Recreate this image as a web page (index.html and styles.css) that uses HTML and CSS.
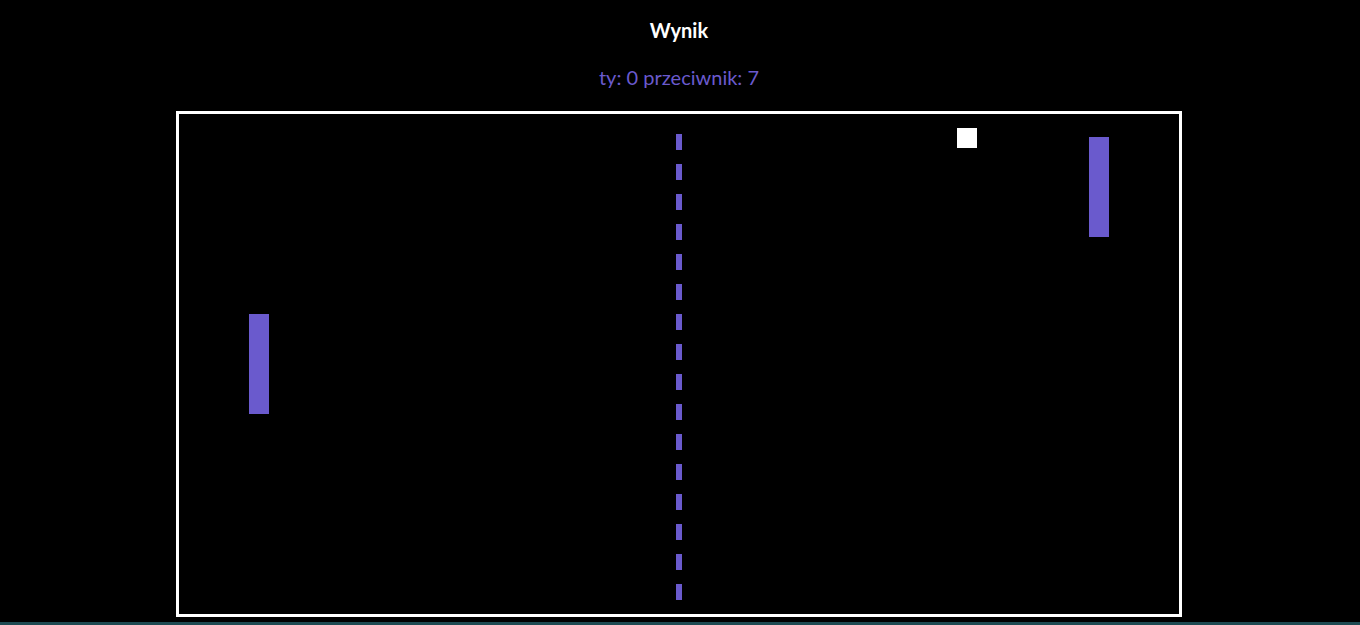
FILE: index.html
```html
<!DOCTYPE html>
<html lang="pl">
<head>
<meta charset="utf-8">
<title>Pong</title>
<link rel="stylesheet" href="styles.css">
</head>
<body>
<main class="page">
  <h1 class="title">Wynik</h1>
  <p class="score">ty: 0 przeciwnik: 7</p>
  <div class="field">
    <div class="net"></div>
    <div class="paddle paddle-left"></div>
    <div class="paddle paddle-right"></div>
    <div class="ball"></div>
  </div>
</main>
<div class="strip"></div>
</body>
</html>
```
FILE: styles.css
```css
html, body {
  margin: 0;
  padding: 0;
  background: #000;
}
body {
  font-family: "Lato", "DejaVu Sans", sans-serif;
  overflow: hidden;
  height: 625px;
}
.page {
  display: flex;
  flex-direction: column;
  align-items: center;
  padding-right: 2px;
}
.title {
  margin: 18px 0 0;
  font-size: 20px;
  line-height: 24px;
  font-weight: 700;
  color: #fff;
}
.score {
  margin: 23px 0 0;
  font-size: 20px;
  line-height: 24px;
  color: #6a5acd;
}
.field {
  position: relative;
  margin-top: 22px;
  width: 1000px;
  height: 500px;
  border: 3px solid #fff;
  background: #000;
}
.net {
  position: absolute;
  left: 497px;
  top: 20px;
  width: 6px;
  height: 466px;
  background: repeating-linear-gradient(to bottom, #6a5acd 0 16px, transparent 16px 30px);
}
.paddle {
  position: absolute;
  width: 20px;
  height: 100px;
  background: #6a5acd;
}
.paddle-left {
  left: 70px;
  top: 200px;
}
.paddle-right {
  left: 910px;
  top: 23px;
}
.ball {
  position: absolute;
  left: 778px;
  top: 14px;
  width: 20px;
  height: 20px;
  background: #fff;
}
.strip {
  margin-top: 5px;
  height: 3px;
  background: #1e4a52;
}
```
